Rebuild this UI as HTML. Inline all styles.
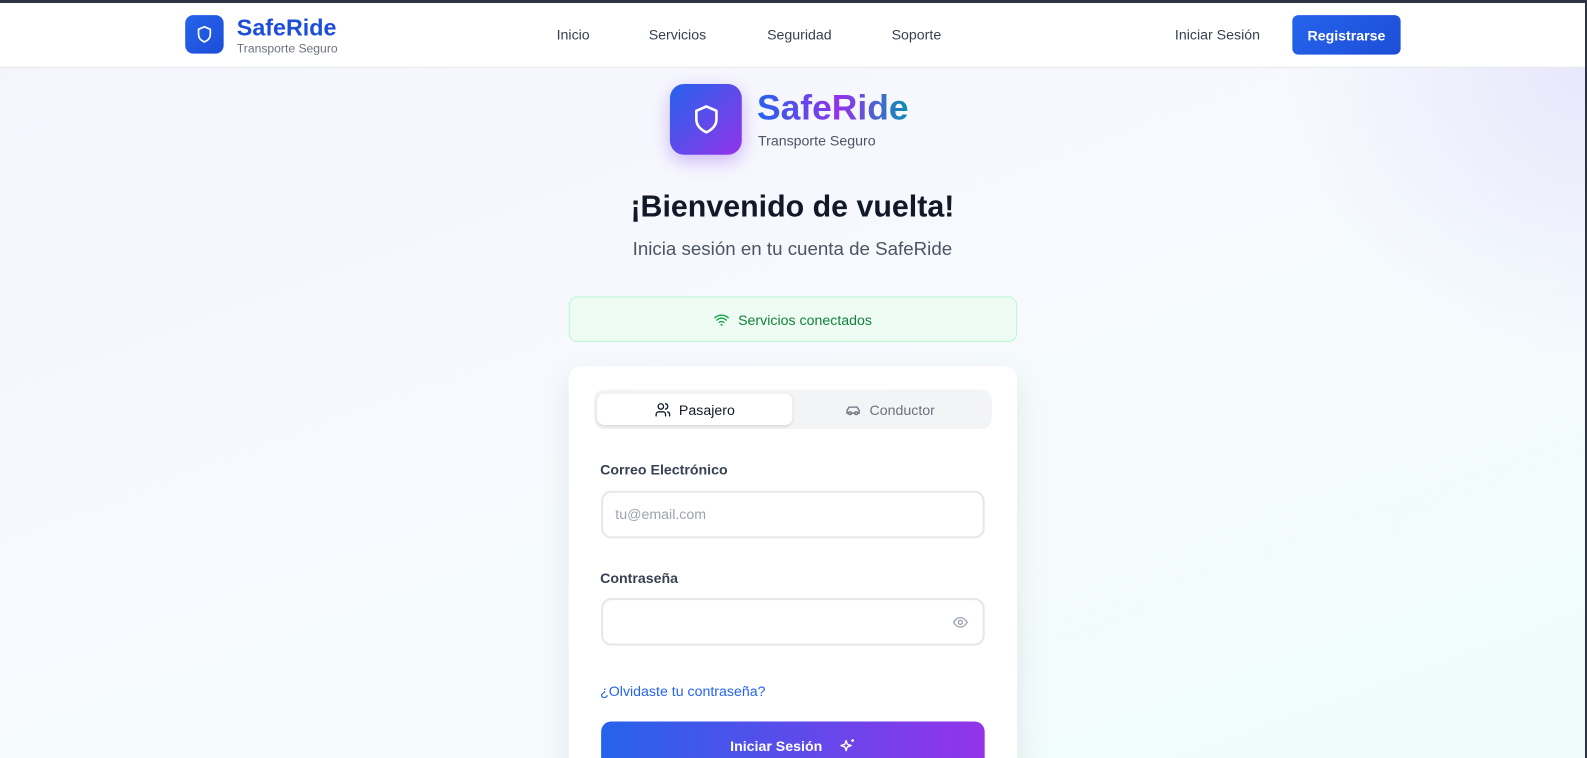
<!DOCTYPE html>
<html><head><meta charset="utf-8"><style>
*{box-sizing:border-box;margin:0;padding:0}
html,body{width:1587px;height:758px;overflow:hidden}
body{font-family:"Liberation Sans",sans-serif;background:#2d3340;position:relative}
.page{position:absolute;left:0;top:3px;width:1585px;height:755px;overflow:hidden;
background:linear-gradient(160deg,#f3f4fd 0%,#f7f8fe 35%,#f5fbfd 60%,#effcfc 100%)}
.wrap{position:absolute;left:0;top:0;width:1585px;height:760px;transform:scale(1.012);transform-origin:0 0}
.glow{position:absolute;right:0;top:60px;width:300px;height:300px;background:radial-gradient(circle at 100% 0,#e8e7fc,transparent 70%)}
nav{position:absolute;left:0;top:0;width:100%;height:64px;background:#fff;border-bottom:1px solid #e5e7eb}
.abs{position:absolute}
.lnk{position:absolute;top:23px;font-size:14px;color:#374151}
</style></head><body><div class="page">
<div class="glow"></div>
<div class="wrap">
<nav>
 <div class="abs" style="left:183px;top:12px;width:38px;height:38px;border-radius:8px;background:linear-gradient(135deg,#2563eb,#1d4ed8);display:flex;align-items:center;justify-content:center">
  <svg width="20" height="20" viewBox="0 0 24 24" fill="none" stroke="#fff" stroke-width="2" stroke-linejoin="round"><path d="M12 3 L19 6 V12 C19 16.5 15.5 19.5 12 21 C8.5 19.5 5 16.5 5 12 V6 Z"/></svg>
 </div>
 <div class="abs" style="left:234px;top:11px;font-size:23px;font-weight:bold;color:#1d4ed8">SafeRide</div>
 <div class="abs" style="left:234px;top:38px;font-size:12px;color:#6b7280">Transporte Seguro</div>
 <div class="lnk" style="left:550px">Inicio</div>
 <div class="lnk" style="left:641px">Servicios</div>
 <div class="lnk" style="left:758px">Seguridad</div>
 <div class="lnk" style="left:881px">Soporte</div>
 <div class="lnk" style="left:1161px">Iniciar Sesión</div>
 <div class="abs" style="left:1277px;top:12px;width:107px;height:39px;border-radius:6px;background:linear-gradient(135deg,#2563eb,#1d4ed8);color:#fff;font-size:14px;font-weight:bold;display:flex;align-items:center;justify-content:center">Registrarse</div>
</nav>
<div class="abs" style="left:662px;top:80px;width:71px;height:70px;border-radius:14px;background:linear-gradient(135deg,#2563eb,#9333ea);box-shadow:0 6px 18px rgba(124,58,237,.35);display:flex;align-items:center;justify-content:center">
 <svg width="34" height="34" viewBox="0 0 24 24" fill="none" stroke="#fff" stroke-width="1.8" stroke-linejoin="round"><path d="M12 3 L19 6 V12 C19 16.5 15.5 19.5 12 21 C8.5 19.5 5 16.5 5 12 V6 Z"/></svg>
</div>
<div class="abs" style="left:748px;top:84px;font-size:35px;font-weight:bold;background:linear-gradient(90deg,#2563eb,#9333ea 55%,#0891b2);-webkit-background-clip:text;background-clip:text;color:transparent">SafeRide</div>
<div class="abs" style="left:749px;top:128px;font-size:14px;color:#4b5563">Transporte Seguro</div>
<div class="abs" style="left:0;width:1566px;text-align:center;top:185px;font-size:30px;font-weight:bold;color:#111827">¡Bienvenido de vuelta!</div>
<div class="abs" style="left:0;width:1566px;text-align:center;top:232px;font-size:18.5px;color:#4b5563">Inicia sesión en tu cuenta de SafeRide</div>
<div class="abs" style="left:562px;top:290px;width:443px;height:45px;border:1px solid #bbf7d0;border-radius:8px;background:#edfbf2;display:flex;align-items:center;justify-content:center;color:#15803d;font-size:14px">
 <svg width="16" height="16" viewBox="0 0 24 24" fill="none" stroke="#16a34a" stroke-width="2" stroke-linecap="round" style="margin-right:8px"><path d="M2 9a15 15 0 0 1 20 0M5 12.5a10 10 0 0 1 14 0M8.5 16a5 5 0 0 1 7 0"/><circle cx="12" cy="19.5" r=".6"/></svg>Servicios conectados</div>
<div class="abs" style="left:562px;top:359px;width:443px;height:420px;background:#fff;border-radius:12px;box-shadow:0 10px 30px rgba(0,0,0,.08)">
 <div class="abs" style="left:25px;top:23px;width:393px;height:39px;border-radius:10px;background:#f3f4f6"></div>
 <div class="abs" style="left:28px;top:27px;width:193px;height:31px;border-radius:7px;background:#fff;box-shadow:0 1px 3px rgba(0,0,0,.12);display:flex;align-items:center;justify-content:center;font-size:14px;color:#111827">
  <svg width="16" height="16" viewBox="0 0 24 24" fill="none" stroke="#111827" stroke-width="2" stroke-linecap="round" style="margin-right:8px"><circle cx="9" cy="7" r="4"/><path d="M2 21v-2a4 4 0 0 1 4-4h6a4 4 0 0 1 4 4v2M16 3.1a4 4 0 0 1 0 7.8M22 21v-2a4 4 0 0 0-3-3.9"/></svg>Pasajero</div>
 <div class="abs" style="left:221px;top:27px;width:193px;height:31px;display:flex;align-items:center;justify-content:center;font-size:14px;color:#6b7280">
  <svg width="16" height="16" viewBox="0 0 24 24" fill="none" stroke="#6b7280" stroke-width="2" stroke-linecap="round" style="margin-right:8px"><path d="M19 17h2v-4l-3-5H6l-3 5v4h2"/><circle cx="7.5" cy="17" r="2"/><circle cx="16.5" cy="17" r="2"/><path d="M9.5 17h5"/></svg>Conductor</div>
 <div class="abs" style="left:31px;top:94px;font-size:14px;font-weight:bold;color:#374151">Correo Electrónico</div>
 <div class="abs" style="left:32px;top:123px;width:379px;height:47px;border:2px solid #e5e7eb;border-radius:10px;padding-left:12px;line-height:43px;font-size:14px;color:#9ca3af">tu@email.com</div>
 <div class="abs" style="left:31px;top:201px;font-size:14px;font-weight:bold;color:#374151">Contraseña</div>
 <div class="abs" style="left:32px;top:229px;width:379px;height:47px;border:2px solid #e5e7eb;border-radius:10px">
  <svg class="abs" style="left:345px;top:14px" width="16" height="16" viewBox="0 0 24 24" fill="none" stroke="#9ca3af" stroke-width="2"><path d="M2 12s3.5-7 10-7 10 7 10 7-3.5 7-10 7S2 12 2 12z"/><circle cx="12" cy="12" r="3"/></svg>
 </div>
 <div class="abs" style="left:31px;top:313px;font-size:14px;color:#2563eb">¿Olvidaste tu contraseña?</div>
 <div class="abs" style="left:32px;top:351px;width:379px;height:50px;border-radius:10px;background:linear-gradient(90deg,#2563eb,#9333ea);color:#fff;font-size:14px;font-weight:bold;display:flex;align-items:flex-start;padding-top:16px;justify-content:center">Iniciar Sesión
  <svg width="17" height="17" viewBox="0 0 24 24" fill="none" stroke="#fff" stroke-width="2" stroke-linejoin="round" style="margin-left:16px"><path d="M10 4l1.8 5.2L17 11l-5.2 1.8L10 18l-1.8-5.2L3 11l5.2-1.8z"/><path d="M19 2v4M17 4h4"/></svg></div>
</div>
</div>
</div></body></html>
